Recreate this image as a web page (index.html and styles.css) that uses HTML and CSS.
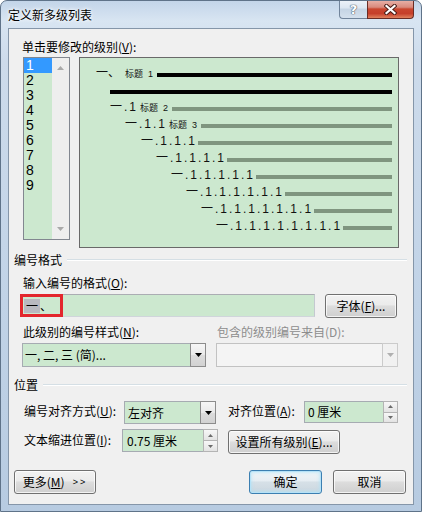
FILE: index.html
```html
<!DOCTYPE html>
<html lang="zh-CN">
<head>
<meta charset="utf-8">
<title>定义新多级列表</title>
<link rel="stylesheet" href="styles.css">
</head>
<body>
<div class="window">
  <div class="titlebar">
    <div class="title">定义新多级列表</div>
    <div class="caps">
      <div class="cap help">?</div>
      <div class="cap close">
        <svg width="13" height="11" viewBox="0 0 13 11">
          <path d="M2.5 2 L10.5 9 M10.5 2 L2.5 9" stroke="#4a1e18" stroke-width="4.2" stroke-linecap="square" fill="none"/>
          <path d="M2.5 2 L10.5 9 M10.5 2 L2.5 9" stroke="#ffffff" stroke-width="2.2" stroke-linecap="square" fill="none"/>
        </svg>
      </div>
    </div>
  </div>
  <div class="client">
    <div class="lbl first">单击要修改的级别(<u>V</u>):</div>
    <div class="toprow">
      <div class="listbox">
        <div class="items">
          <div class="item sel">1</div>
          <div class="item">2</div>
          <div class="item">3</div>
          <div class="item">4</div>
          <div class="item">5</div>
          <div class="item">6</div>
          <div class="item">7</div>
          <div class="item">8</div>
          <div class="item">9</div>
        </div>
        <div class="vscroll">
          <svg width="7" height="4" viewBox="0 0 7 4"><polygon points="0,4 3.5,0 7,4" fill="#a9a9a9"/></svg>
          <svg width="7" height="4" viewBox="0 0 7 4"><polygon points="0,0 7,0 3.5,4" fill="#a9a9a9"/></svg>
        </div>
      </div>
      <div class="preview">
        <div class="prow i1"><span class="num n0">一、</span><span class="tag t0">标题</span><span class="tag k">1</span><div class="bar black"></div></div>
        <div class="prow i2"><div class="bar black b0"></div></div>
        <div class="prow i2"><span class="num">一.1</span><span class="tag">标题</span><span class="tag k">2</span><div class="bar"></div></div>
        <div class="prow i3"><span class="num">一.1.1</span><span class="tag">标题</span><span class="tag k">3</span><div class="bar"></div></div>
        <div class="prow i4"><span class="num">一.1.1.1</span><div class="bar"></div></div>
        <div class="prow i5"><span class="num">一.1.1.1.1</span><div class="bar"></div></div>
        <div class="prow i6"><span class="num">一.1.1.1.1.1</span><div class="bar"></div></div>
        <div class="prow i7"><span class="num">一.1.1.1.1.1.1</span><div class="bar"></div></div>
        <div class="prow i8"><span class="num">一.1.1.1.1.1.1.1</span><div class="bar"></div></div>
        <div class="prow i9"><span class="num">一.1.1.1.1.1.1.1.1</span><div class="bar"></div></div>
      </div>
    </div>

    <div class="group g1"><span>编号格式</span><div class="gline"></div></div>
    <div class="lbl fmt">输入编号的格式(<u>O</u>):</div>
    <div class="fmtrow">
      <div class="field fmtinput"><span class="ph">一</span><span>、</span><div class="mark"></div></div>
      <div class="btn font">字体(<u>F</u>)...</div>
    </div>
    <div class="lblrow">
      <div class="lbl style">此级别的编号样式(<u>N</u>):</div>
      <div class="lbl dis">包含的级别编号来自(D):</div>
    </div>
    <div class="selrow">
      <div class="combo numstyle">
        <div class="ctext">一, 二, 三 (简)...</div>
        <div class="drop"><svg width="7" height="4" viewBox="0 0 7 4"><polygon points="0,0 7,0 3.5,4" fill="#000"/></svg></div>
      </div>
      <div class="combo from disabled">
        <div class="ctext"></div>
        <div class="drop"><svg width="7" height="4" viewBox="0 0 7 4"><polygon points="0,0 7,0 3.5,4" fill="#b0b0b0"/></svg></div>
      </div>
    </div>

    <div class="group g2"><span>位置</span><div class="gline"></div></div>
    <div class="posrow r1">
      <div class="plbl w100">编号对齐方式(<u>U</u>):</div>
      <div class="combo align">
        <div class="ctext">左对齐</div>
        <div class="drop"><svg width="7" height="4" viewBox="0 0 7 4"><polygon points="0,0 7,0 3.5,4" fill="#000"/></svg></div>
      </div>
      <div class="plbl w76">对齐位置(<u>A</u>):</div>
      <div class="spin s1">
        <div class="ctext">0 厘米</div>
        <div class="spbtns">
          <div class="sb"><svg width="5" height="3" viewBox="0 0 5 3"><polygon points="0,3 2.5,0 5,3" fill="#6b6b6b"/></svg></div>
          <div class="sb"><svg width="5" height="3" viewBox="0 0 5 3"><polygon points="0,0 5,0 2.5,3" fill="#6b6b6b"/></svg></div>
        </div>
      </div>
    </div>
    <div class="posrow r2">
      <div class="plbl w98">文本缩进位置(<u>I</u>):</div>
      <div class="spin s2">
        <div class="ctext">0.75 厘米</div>
        <div class="spbtns">
          <div class="sb"><svg width="5" height="3" viewBox="0 0 5 3"><polygon points="0,3 2.5,0 5,3" fill="#6b6b6b"/></svg></div>
          <div class="sb"><svg width="5" height="3" viewBox="0 0 5 3"><polygon points="0,0 5,0 2.5,3" fill="#6b6b6b"/></svg></div>
        </div>
      </div>
      <div class="btn setall">设置所有级别(<u>E</u>)...</div>
    </div>

    <div class="bottom">
      <div class="btn more">更多(<u>M</u>)<span class="chev">&gt;&gt;</span></div>
      <div class="spacer"></div>
      <div class="btn ok">确定</div>
      <div class="btn cancel">取消</div>
    </div>
  </div>
</div>
</body>
</html>
```

FILE: styles.css
```css
* { box-sizing: border-box; }
html, body { margin: 0; padding: 0; }
body {
  width: 422px;
  height: 512px;
  overflow: hidden;
  background: #ffffff;
  font-family: "Noto Sans CJK SC", "Liberation Sans", sans-serif;
  font-size: 12px;
  color: #000;
}
u { text-decoration: underline; text-underline-offset: 1px; }

.window {
  width: 422px;
  height: 512px;
  border: 1px solid #5f7389;
  border-radius: 7px 7px 0 0;
  background: linear-gradient(180deg, #c3d5e9 0, #d8e5f2 20px, #cddbeb 60px, #c1d3e7 300px, #b7cbe1 100%);
  display: flex;
  flex-direction: column;
  overflow: hidden;
}

.titlebar {
  height: 27px;
  flex: none;
  display: flex;
  align-items: flex-start;
  padding: 0 7px 0 7px;
}
.title {
  margin-top: 6px;
  line-height: 16px;
  font-size: 12px;
  text-shadow: 0 0 5px #fff, 0 0 3px #fff;
}
.caps {
  margin-left: auto;
  margin-top: -1px;
  display: flex;
}
.cap {
  height: 19px;
  display: flex;
  align-items: center;
  justify-content: center;
}
.help {
  width: 28px;
  border: 1px solid #71849b;
  border-top: none;
  border-right: none;
  border-radius: 0 0 0 4px;
  background: linear-gradient(180deg, #eef3f9 0, #dce6f1 45%, #c5d4e4 50%, #d4e0ed 100%);
  font: bold 13px "DejaVu Sans", sans-serif;
  color: #ffffff;
  text-shadow: 0 0 1px #4d5d70, 0 0 1px #4d5d70, 0 0 1px #4d5d70;
  padding-top: 1px;
}
.close {
  width: 47px;
  border: 1px solid #6a2c24;
  border-top: none;
  border-radius: 0 0 4px 0;
  background: linear-gradient(180deg, #e9b4ab 0, #d98a7d 40%, #c9462f 50%, #c53f2a 75%, #e0815d 100%);
}

.client {
  margin: 0 7px;
  height: 477px;
  flex: none;
  background: #f0f0f0;
  border: 1px solid #8596a9;
  display: flex;
  flex-direction: column;
}

.lbl { line-height: 16px; white-space: nowrap; }
.lbl.first { margin: 10px 0 0 13px; }

.toprow {
  margin: 2px 0 0 14px;
  display: flex;
  gap: 9px;
  align-items: flex-start;
}

.listbox {
  width: 47px;
  height: 183px;
  border: 1px solid #828790;
  display: flex;
  background: #cce8cf;
}
.items { width: 28px; }
.item {
  height: 15px;
  line-height: 15px;
  padding-left: 2px;
  font-family: "Liberation Sans", sans-serif;
  font-size: 14px;
}
.item.sel { background: #3399ff; color: #fff; }
.vscroll {
  flex: 1;
  background: #eeeeee;
  display: flex;
  flex-direction: column;
  align-items: center;
  justify-content: space-between;
  padding: 8px 0 8px 0;
}
.vscroll svg { display: block; }

.preview {
  width: 320px;
  height: 191px;
  border: 1px solid #696969;
  background: #cce8cf;
  padding: 8px 6px 0 0;
}
.prow {
  display: flex;
  align-items: baseline;
  height: 17px;
}
.i1 { margin-left: 16px; }
.i2 { margin-left: 30px; }
.i3 { margin-left: 45px; }
.i4 { margin-left: 61px; }
.i5 { margin-left: 76px; }
.i6 { margin-left: 91px; }
.i7 { margin-left: 106px; }
.i8 { margin-left: 121px; }
.i9 { margin-left: 136px; }

.num {
  font-family: "Liberation Sans", "Noto Sans CJK SC", sans-serif;
  font-size: 12px;
  line-height: 14px;
  letter-spacing: 2px;
  white-space: nowrap;
  color: #111;
}
.num.n0 { letter-spacing: 0; }
.tag {
  font-family: "Liberation Sans", "Noto Sans CJK SC", sans-serif;
  font-size: 9px;
  line-height: 14px;
  margin-left: 2px;
  color: #111;
}
.tag.t0 { margin-left: 5px; }
.tag.k { margin-left: 5px; }
.bar {
  flex: 1;
  height: 4px;
  align-self: flex-start;
  margin-top: 7px;
  margin-left: 1px;
  background: #7f957f;
}
.tag.k + .bar { margin-left: 4px; }
.bar.black { background: #000; }
.bar.b0 { margin-left: 0; }

.group {
  display: flex;
  align-items: center;
  margin: 0 6px 0 5px;
  line-height: 16px;
}
.group.g1 { margin-top: 4px; }
.group.g2 { margin-top: 10px; }
.gline {
  flex: 1;
  margin-left: 5px;
  height: 2px;
  border-top: 1px solid #d5dfe5;
  border-bottom: 1px solid #ffffff;
}

.lbl.fmt { margin: 7px 0 0 14px; }
.fmtrow {
  margin: 3px 0 0 11px;
  display: flex;
  gap: 10px;
  align-items: flex-start;
}
.field {
  background: #cce8cf;
  border: 1px solid #abadb3;
  border-color: #abadb3 #c4c9d0 #d0d5db #c4c9d0;
}
.fmtinput {
  position: relative;
  width: 295px;
  height: 23px;
  display: flex;
  align-items: center;
  padding-left: 3px;
}
.ph {
  display: inline-block;
  background: #b9b9c0;
  line-height: 14px;
  padding: 0 2px;
}
.mark {
  position: absolute;
  left: -1px;
  top: -1px;
  width: 43px;
  height: 23px;
  border: 3px solid #e3262d;
}

.btn {
  height: 24px;
  display: flex;
  align-items: center;
  justify-content: center;
  border: 1px solid #707070;
  border-radius: 3px;
  background: linear-gradient(180deg, #f2f2f2 0, #ebebeb 45%, #dddddd 50%, #cfcfcf 100%);
  box-shadow: inset 0 0 0 1px rgba(255, 255, 255, 0.75);
  white-space: nowrap;
  line-height: 16px;
}
.btn.font { width: 72px; }

.lblrow {
  margin: 6px 0 0 14px;
  display: flex;
}
.lbl.style { width: 194px; }
.lbl.dis { color: #8d8d8d; }

.selrow {
  margin: 3px 0 0 13px;
  display: flex;
  gap: 10px;
}
.combo {
  display: flex;
  height: 24px;
  background: #cce8cf;
  border: 1px solid #a6abb2;
}
.combo.numstyle { width: 184px; }
.combo.from { width: 182px; }
.ctext {
  flex: 1;
  display: flex;
  align-items: center;
  padding-left: 2px;
  white-space: nowrap;
  line-height: 16px;
}
.drop {
  width: 16px;
  border: 1px solid #8c8c8c;
  margin: -1px -1px -1px 0;
  background: linear-gradient(180deg, #f6f6f6 0, #e9e9e9 50%, #dcdcdc 50%, #d2d2d2 100%);
  display: flex;
  align-items: center;
  justify-content: center;
}
.combo.disabled { background: #f4f4f4; border-color: #c2c2c2; }
.combo.disabled .drop { border-color: #cbcbcb; background: #f1f1f1; }

.posrow {
  display: flex;
  align-items: flex-start;
  margin-left: 15px;
}
.posrow.r1 { margin-top: 8px; height: 23px; }
.posrow.r2 { margin-top: 5px; height: 25px; }
.plbl {
  line-height: 16px;
  white-space: nowrap;
}
.r1 .plbl { margin-top: 2px; }
.r2 .plbl { margin-top: 3px; }
.w100 { width: 100px; }
.w98 { width: 98px; }
.w76 { width: 76px; margin-left: 12px; }
.combo.align { width: 92px; height: 23px; }
.combo.align .ctext { padding-left: 3px; }

.spin {
  display: flex;
  background: #cce8cf;
  border: 1px solid #a6abb2;
}
.spin.s1 { width: 94px; height: 22px; }
.spin.s2 { width: 96px; height: 23px; }
.spin .ctext { padding-left: 3px; }
.spin.s2 .ctext { padding-left: 4px; }
.spbtns {
  width: 15px;
  display: flex;
  flex-direction: column;
  background: #f0f0f0;
  margin: -1px -1px -1px 0;
  padding: 0;
}
.sb {
  flex: 1;
  display: flex;
  align-items: center;
  justify-content: center;
  border: 1px solid #b4b4b4;
  background: linear-gradient(180deg, #f7f7f7 0, #e3e3e3 100%);
}
.sb + .sb { border-top: none; }
.sb svg { display: block; }

.btn.setall { width: 112px; margin-left: 10px; margin-top: 1px; }

.bottom {
  margin: 16px 7px 0 5px;
  display: flex;
  align-items: center;
}
.btn.more { width: 82px; }
.chev { font-size: 9px; letter-spacing: 2px; margin-left: 8px; font-family: "Liberation Sans", sans-serif; }
.spacer { flex: 1; }
.btn.ok {
  width: 73px;
  border-color: #3c7fb1;
  box-shadow: inset 0 0 0 1px #b6e2f7, inset 0 0 3px 2px rgba(170, 225, 250, 0.55);
  background: linear-gradient(180deg, #f1f5f8 0, #e6edf2 45%, #d6e0e7 50%, #cbd7df 100%);
}
.btn.cancel { width: 73px; margin-left: 11px; }
```
